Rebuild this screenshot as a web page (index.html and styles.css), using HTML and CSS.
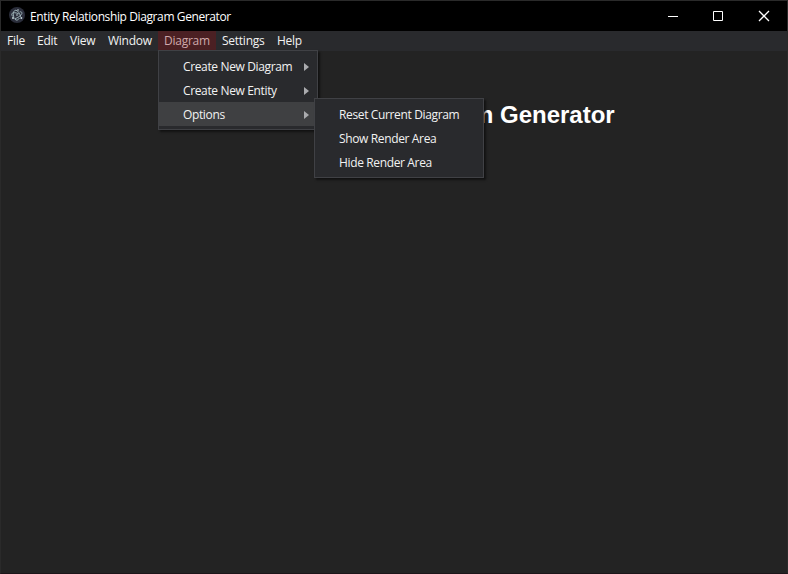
FILE: index.html
```html
<!DOCTYPE html>
<html lang="en">
<head>
<meta charset="utf-8">
<title>Entity Relationship Diagram Generator</title>
<link rel="stylesheet" href="styles.css">
</head>
<body>
<div class="window">
  <header class="titlebar">
    <svg class="logo" viewBox="0 0 16 16">
      <circle cx="8" cy="8" r="8" fill="#2b2e3b"/>
      <g fill="none" stroke="#a9bfc4" stroke-width=".9">
        <path d="M5 10.500C3.500 7 4.500 3 7 3.300c1.800.2 4 3.500 4.600 6.500"/>
        <path d="M10.800 4.700c2.400.1 2.700 1.500 1.200 3.200-1.500 1.800-4.500 3.600-6.600 3.800"/>
        <path d="M3.800 9.500C2 7.500 2.500 5.600 5.500 5.700c1.500 0 3 .5 4.300 1.200M6 12.300c1.500 1.500 3.300.8 4.400-1.200"/>
      </g>
      <g fill="#c4d5d8"><circle cx="8" cy="8" r=".8"/><circle cx="4" cy="11" r="1"/><circle cx="12.300" cy="11" r="1"/><circle cx="9" cy="3" r=".8"/></g>
    </svg>
    <span class="title">Entity Relationship Diagram Generator</span>
    <div class="controls">
      <svg viewBox="0 0 46 30"><path d="M18 15.5h10"/></svg>
      <svg viewBox="0 0 46 30"><path d="M17.500 10.500h9v9h-9z"/></svg>
      <svg class="close" viewBox="0 0 46 30"><path d="M17 10l10 10M27 10l-10 10"/></svg>
    </div>
  </header>
  <nav class="menubar">
    <span class="tab">File</span>
    <span class="tab">Edit</span>
    <span class="tab">View</span>
    <span class="tab">Window</span>
    <div class="tab active"><span>Diagram</span>
      <div class="menu main-menu">
        <div class="item"><span>Create New Diagram</span><i class="arrow"></i></div>
        <div class="item"><span>Create New Entity</span><i class="arrow"></i></div>
        <div class="item selected"><span>Options</span><i class="arrow"></i>
          <div class="menu submenu">
            <div class="item"><span>Reset Current Diagram</span></div>
            <div class="item"><span>Show Render Area</span></div>
            <div class="item"><span>Hide Render Area</span></div>
          </div>
        </div>
      </div>
    </div>
    <span class="tab">Settings</span>
    <span class="tab">Help</span>
  </nav>
  <main class="content"><h1>Entity Relationship Diagram Generator</h1></main>
</div>
</body>
</html>
```
FILE: styles.css
```css
* { box-sizing: border-box; }
body { margin: 0; background: #232323; overflow: hidden; }
.window {
  height: 574px;
  border: 1px solid #2a2a2a;
  border-bottom-color: #1c1519;
  font: 12px "Open Sans", "Noto Sans", sans-serif;
  letter-spacing: -.25px;
  color: #f2f2f2;
}
.titlebar { display: flex; align-items: center; height: 30px; padding-left: 8px; background: #000; color: #fff; }
.logo { width: 16px; height: 16px; margin-top: -2px; }
.title { margin-left: 5px; white-space: nowrap; letter-spacing: -.39px; }
.controls { display: flex; margin: -1px -1px 0 auto; }
.controls svg { width: 46px; height: 30px; fill: none; stroke: #fff; }
.controls .close { stroke-width: 1.3; }
.menubar {
  display: grid;
  grid-template-columns: 30px 33px 38px 56px 58px 55px 37px;
  height: 20px;
  background: #292a2d;
}
.tab { position: relative; padding-left: 6px; line-height: 20px; white-space: nowrap; color: #f2f2f2; }
.active { background: #4b2023; color: #cfa9ab; }
.menu {
  position: absolute;
  padding: 3px 0;
  border: 1px solid #404145;
  background: #292a2d;
  color: #f2f2f2;
  letter-spacing: -.36px;
  box-shadow: 2px 2px 2px rgba(0, 0, 0, .5);
}
.main-menu { top: 19px; left: 0; width: 160px; height: 80px; }
.submenu { top: -4px; left: 155px; width: 170px; height: 80px; }
.item {
  position: relative;
  display: flex;
  align-items: center;
  justify-content: space-between;
  height: 24px;
  padding: 1px 8px 0 24px;
}
.item > span { position: relative; top: .5px; }
.selected { background: #3f4042; }
.arrow { border-left: 5px solid #aaabae; border-top: 4px solid transparent; border-bottom: 4px solid transparent; }
.content { padding-top: 50px; }
h1 {
  margin: 0;
  text-align: center;
  font: bold 24px/28px "Liberation Sans", Arial, sans-serif;
  letter-spacing: 0;
  color: #fff;
}
```
